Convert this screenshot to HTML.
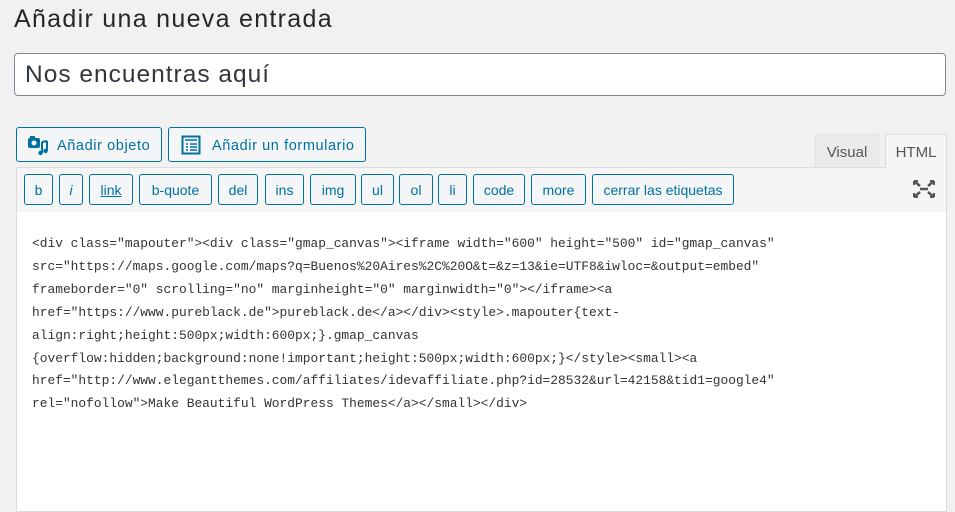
<!DOCTYPE html>
<html><head><meta charset="utf-8"><style>
*{box-sizing:border-box;margin:0;padding:0}
body{width:955px;height:499px;background:#f1f1f1;font-family:"Liberation Sans",sans-serif;color:#23282d;position:relative;overflow:hidden}
.abs{position:absolute}
h1{position:absolute;left:14px;top:5px;font-size:25px;letter-spacing:1.3px;font-weight:400;color:#23282d}
.title{left:14px;top:53px;width:932px;height:43px;background:#fff;border:1px solid #7e8993;border-radius:4px;font-size:24.5px;letter-spacing:1px;padding:7px 10px;color:#32373c}
.mb{top:127px;height:35px;border:1px solid #0071a1;border-radius:3px;background:#f3f5f6;color:#0071a1;font-size:14.5px;letter-spacing:0.6px;line-height:36px}
.tab{top:134px;height:34px;font-size:15px;line-height:36px;color:#555;text-align:center}
.tb{left:16px;top:167px;width:931px;height:46px;background:#f5f5f5;border:1px solid #dcdcde;border-bottom:1px solid #e0e0e0}
.b{top:174px;height:31px;border:1px solid #0071a1;border-radius:3px;background:#f3f5f6;color:#0071a1;font-size:14px;line-height:31px;text-align:center}
.ed{left:16px;top:212px;width:931px;height:300px;background:#fff;border:1px solid #dcdcde;border-top:none}
pre{position:absolute;left:32px;top:233px;font-family:"Liberation Mono",monospace;font-size:12.9px;line-height:22.9px;color:#333;white-space:pre}
</style></head><body>
<h1>Añadir una nueva entrada</h1>
<div class="abs title">Nos encuentras aquí</div>
<div class="abs mb" style="left:16px;width:146px;padding-left:40px">Añadir objeto
<svg class="abs" style="left:10px;top:8px" width="22" height="20" viewBox="0 0 22 20"><rect x="1" y="2" width="12" height="10" rx="2" fill="#0071a1"/><circle cx="7" cy="7" r="2.5" fill="#f3f5f6"/><rect x="3" y="0" width="5" height="3" fill="#0071a1"/><path d="M15 6v11M20 5v10M15 6l5-1" stroke="#0071a1" stroke-width="2" fill="none"/><circle cx="13.5" cy="17" r="2.2" fill="#0071a1"/><circle cx="18.5" cy="15" r="2.2" fill="#0071a1"/></svg></div>
<div class="abs mb" style="left:168px;width:198px;padding-left:43px">Añadir un formulario
<svg class="abs" style="left:12px;top:7px" width="20" height="20" viewBox="0 0 20 20"><rect x="1.5" y="1.5" width="17" height="17" fill="none" stroke="#0071a1" stroke-width="2"/><path d="M4 5h12M5 9h2M9 9h7M5 12h2M9 12h7M5 15h2M9 15h7" stroke="#0071a1" stroke-width="1.5"/></svg></div>
<div class="abs tab" style="left:815px;width:64px;background:#ebebeb;border:1px solid #e2e2e2">Visual</div>
<div class="abs tb"></div>
<div class="abs tab" style="left:885px;width:62px;background:#f5f5f5;border:1px solid #dcdcde;border-bottom:none;height:35px">HTML</div>
<div class="abs b" style="left:24px;width:29px">b</div>
<div class="abs b" style="left:59px;width:24px;font-style:italic">i</div>
<div class="abs b" style="left:89px;width:44px;text-decoration:underline">link</div>
<div class="abs b" style="left:139px;width:73px">b-quote</div>
<div class="abs b" style="left:218px;width:40px">del</div>
<div class="abs b" style="left:265px;width:39px">ins</div>
<div class="abs b" style="left:310px;width:46px">img</div>
<div class="abs b" style="left:361px;width:33px">ul</div>
<div class="abs b" style="left:399px;width:34px">ol</div>
<div class="abs b" style="left:438px;width:29px">li</div>
<div class="abs b" style="left:473px;width:52px">code</div>
<div class="abs b" style="left:531px;width:55px">more</div>
<div class="abs b" style="left:592px;width:142px">cerrar las etiquetas</div>
<svg class="abs" style="left:913px;top:180px" width="22" height="18" viewBox="0 0 22 18"><path d="M1 1l6 5M21 1l-6 5M1 17l6-5M21 17l-6-5M7 9h8" stroke="#555" stroke-width="2.5"/><path d="M1 1h4M1 1v4M21 1h-4M21 1v4M1 17h4M1 17v-4M21 17h-4M21 17v-4" stroke="#555" stroke-width="2"/></svg>
<div class="abs ed"></div>
<pre>&lt;div class="mapouter"&gt;&lt;div class="gmap_canvas"&gt;&lt;iframe width="600" height="500" id="gmap_canvas"
src="https://maps.google.com/maps?q=Buenos%20Aires%2C%20O&amp;t=&amp;z=13&amp;ie=UTF8&amp;iwloc=&amp;output=embed"
frameborder="0" scrolling="no" marginheight="0" marginwidth="0"&gt;&lt;/iframe&gt;&lt;a
href="https://www.pureblack.de"&gt;pureblack.de&lt;/a&gt;&lt;/div&gt;&lt;style&gt;.mapouter{text-
align:right;height:500px;width:600px;}.gmap_canvas
{overflow:hidden;background:none!important;height:500px;width:600px;}&lt;/style&gt;&lt;small&gt;&lt;a
href="http://www.elegantthemes.com/affiliates/idevaffiliate.php?id=28532&amp;url=42158&amp;tid1=google4"
rel="nofollow"&gt;Make Beautiful WordPress Themes&lt;/a&gt;&lt;/small&gt;&lt;/div&gt;</pre>
</body></html>
